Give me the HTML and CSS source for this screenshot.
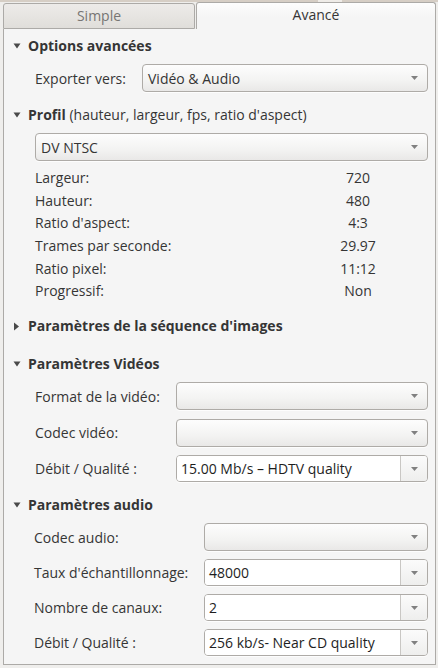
FILE: index.html
```html
<!DOCTYPE html>
<html lang="fr">
<head>
<meta charset="utf-8">
<title>Paramètres d'export</title>
<link rel="stylesheet" href="styles.css">
</head>
<body>
<div class="topstrip"></div>
<div class="notebook">
  <div class="tabs">
    <div class="tab inactive">Simple</div>
    <div class="tab active">Avancé</div>
  </div>
  <div class="panel">
    <div class="section s-options">
      <div class="expander"><svg class="tri" width="8" height="6" viewBox="0 0 8 6"><path d="M0.5 0.5 H7.5 L4 5.5 Z"/></svg><b>Options avancées</b></div>
      <div class="row r-export">
        <span class="label">Exporter vers:</span>
        <div class="combo"><span class="ctext">Vidéo &amp; Audio</span><svg class="arr" width="7" height="4" viewBox="0 0 7 4"><path d="M0 0 H7 L3.5 4 Z"/></svg></div>
      </div>
    </div>

    <div class="section s-profil">
      <div class="expander"><svg class="tri" width="8" height="6" viewBox="0 0 8 6"><path d="M0.5 0.5 H7.5 L4 5.5 Z"/></svg><b>Profil</b>&nbsp;(hauteur, largeur, fps, ratio d'aspect)</div>
      <div class="row r-profile">
        <div class="combo"><span class="ctext">DV NTSC</span><svg class="arr" width="7" height="4" viewBox="0 0 7 4"><path d="M0 0 H7 L3.5 4 Z"/></svg></div>
      </div>
      <div class="props">
        <span>Largeur:</span><span class="val">720</span>
        <span>Hauteur:</span><span class="val">480</span>
        <span>Ratio d'aspect:</span><span class="val">4:3</span>
        <span>Trames par seconde:</span><span class="val">29.97</span>
        <span>Ratio pixel:</span><span class="val">11:12</span>
        <span>Progressif:</span><span class="val">Non</span>
      </div>
    </div>

    <div class="section s-seq">
      <div class="expander"><svg class="tri" width="8" height="9" viewBox="0 0 8 9"><path d="M1 0.5 L6 4.5 L1 8.5 Z"/></svg><b>Paramètres de la séquence d'images</b></div>
    </div>

    <div class="section s-video">
      <div class="expander"><svg class="tri" width="8" height="6" viewBox="0 0 8 6"><path d="M0.5 0.5 H7.5 L4 5.5 Z"/></svg><b>Paramètres Vidéos</b></div>
      <div class="grid g-video">
        <span class="label">Format de la vidéo:</span>
        <div class="combo"><span class="ctext"></span><svg class="arr" width="7" height="4" viewBox="0 0 7 4"><path d="M0 0 H7 L3.5 4 Z"/></svg></div>
        <span class="label">Codec vidéo:</span>
        <div class="combo"><span class="ctext"></span><svg class="arr" width="7" height="4" viewBox="0 0 7 4"><path d="M0 0 H7 L3.5 4 Z"/></svg></div>
        <span class="label">Débit / Qualité :</span>
        <div class="ecombo"><span class="etext">15.00 Mb/s – HDTV quality</span><span class="ebtn"><svg class="arr" width="7" height="4" viewBox="0 0 7 4"><path d="M0 0 H7 L3.5 4 Z"/></svg></span></div>
      </div>
    </div>

    <div class="section s-audio">
      <div class="expander"><svg class="tri" width="8" height="6" viewBox="0 0 8 6"><path d="M0.5 0.5 H7.5 L4 5.5 Z"/></svg><b>Paramètres audio</b></div>
      <div class="grid g-audio">
        <span class="label">Codec audio:</span>
        <div class="combo"><span class="ctext"></span><svg class="arr" width="7" height="4" viewBox="0 0 7 4"><path d="M0 0 H7 L3.5 4 Z"/></svg></div>
        <span class="label">Taux d'échantillonnage:</span>
        <div class="ecombo"><span class="etext">48000</span><span class="ebtn"><svg class="arr" width="7" height="4" viewBox="0 0 7 4"><path d="M0 0 H7 L3.5 4 Z"/></svg></span></div>
        <span class="label">Nombre de canaux:</span>
        <div class="ecombo"><span class="etext">2</span><span class="ebtn"><svg class="arr" width="7" height="4" viewBox="0 0 7 4"><path d="M0 0 H7 L3.5 4 Z"/></svg></span></div>
        <span class="label">Débit / Qualité :</span>
        <div class="ecombo"><span class="etext">256 kb/s- Near CD quality</span><span class="ebtn"><svg class="arr" width="7" height="4" viewBox="0 0 7 4"><path d="M0 0 H7 L3.5 4 Z"/></svg></span></div>
      </div>
    </div>
  </div>
</div>
</body>
</html>
```

FILE: styles.css
```css
html, body {
  margin: 0;
  padding: 0;
}
body {
  background: #efeeec;
  font-family: "Open Sans", "DejaVu Sans", sans-serif;
  font-size: 14px;
  color: #353535;
  width: 438px;
  height: 668px;
  overflow: hidden;
}
.topstrip {
  height: 2px;
  background: linear-gradient(90deg, #d6cec5 318px, #efece8 318px, #efece8 342px, #d6cec5 342px);
}
.notebook {
  margin: 0 2px 0 3px;
}
.tabs {
  display: flex;
  align-items: flex-end;
  height: 27px;
}
.tab {
  box-sizing: border-box;
  text-align: center;
}
.tab.inactive {
  width: 192px;
  height: 26px;
  line-height: 24px;
  border: 1px solid #acaaa7;
  border-radius: 3px 3px 0 0;
  background: linear-gradient(#edebe9, #e0deda);
  color: #777573;
}
.tab.active {
  flex: 1;
  margin-left: 1px;
  height: 27px;
  line-height: 24px;
  border: 1px solid #acaaa7;
  border-bottom: none;
  border-radius: 3px 3px 0 0;
  background: linear-gradient(#fdfdfd, #f5f5f5 14px);
  color: #353535;
}
.panel {
  box-sizing: border-box;
  height: 636px;
  background: #f5f5f5;
  border: 1px solid #acaaa7;
  border-top: none;
  padding: 7px 7px 0 0;
}
.expander {
  display: flex;
  align-items: center;
  height: 20px;
  line-height: 20px;
  white-space: nowrap;
}
.expander .tri {
  fill: #4a4a4a;
  margin-left: 9px;
  margin-right: 7px;
}
.expander b {
  font-weight: 700;
}
.row {
  display: grid;
  align-items: center;
  margin-top: 8px;
}
.r-export {
  grid-template-columns: 107px 1fr;
  padding-left: 31px;
}
.r-profile {
  padding-left: 31px;
  grid-template-columns: 1fr;
}
.label {
  white-space: nowrap;
}
.combo {
  box-sizing: border-box;
  height: 28px;
  border: 1px solid #aeaba7;
  border-radius: 4px;
  background: linear-gradient(#fdfdfd, #f3f3f2 60%, #e9e8e7);
  box-shadow: 0 1px 0 rgba(255, 255, 255, 0.8);
  display: flex;
  align-items: center;
  padding: 0 9px 0 5px;
  color: #353535;
}
.ctext {
  flex: 1;
}
.arr {
  fill: #808080;
  flex: none;
}
.ecombo {
  box-sizing: border-box;
  height: 27px;
  border: 1px solid #aeaba7;
  border-radius: 4px;
  display: flex;
  overflow: hidden;
  box-shadow: 0 1px 0 rgba(255, 255, 255, 0.8);
}
.etext {
  flex: 1;
  background: #ffffff;
  padding-left: 4px;
  line-height: 25px;
  color: #1e1e1e;
  white-space: nowrap;
}
.ebtn {
  width: 26px;
  border-left: 1px solid #c9c7c4;
  background: linear-gradient(#fbfbfb, #eeeeed);
  display: flex;
  align-items: center;
  justify-content: center;
}
.props {
  display: grid;
  grid-template-columns: 1fr 110px;
  row-gap: 5.67px;
  margin: 8px 15px 0 31px;
  line-height: 17px;
}
.props .val {
  text-align: center;
}
.s-profil {
  margin-top: 13px;
}
.s-seq {
  margin-top: 17px;
}
.s-video {
  margin-top: 18px;
}
.s-audio {
  margin-top: 13px;
}
.grid {
  display: grid;
  align-items: center;
  row-gap: 8.5px;
  margin-top: 8px;
}
.g-video {
  grid-template-columns: 141px 1fr;
  padding-left: 31px;
}
.g-audio {
  grid-template-columns: 170px 1fr;
  padding-left: 30px;
  row-gap: 8px;
}
```
